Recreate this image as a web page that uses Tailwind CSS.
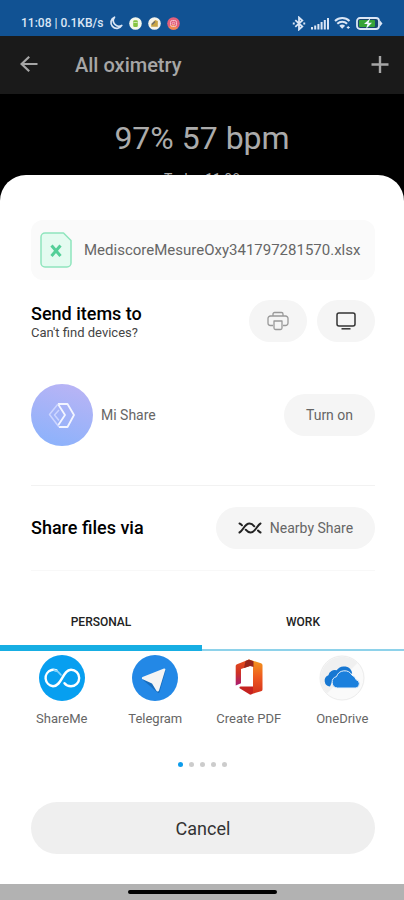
<!DOCTYPE html>
<html lang="en">
<head>
<meta charset="utf-8">
<meta name="viewport" content="width=device-width, initial-scale=1">
<title>All oximetry</title>
<script src="https://cdn.jsdelivr.net/npm/@tailwindcss/browser@4"></script>
</head>
<body class="flex min-h-screen flex-col bg-black font-['Roboto',sans-serif] text-[#555]">

<div class="flex h-9 items-center justify-between bg-[#115293] px-[21px] pt-[10px] text-[#dbe6f5]">
  <div class="flex items-center">
    <span class="text-[12px] font-medium leading-4">11:08 | 0.1KB/s</span>
    <svg class="ml-[6px] size-[14px]" viewBox="0 0 14 14" fill="none" stroke="currentColor" stroke-width="1.7" stroke-linejoin="round"><path d="M5.5 1.2a5.8 5.8 0 1 0 7.3 8.2A5.6 5.6 0 0 1 5.5 1.2z"/></svg>
    <svg class="ml-[6px] size-[13px]" viewBox="0 0 13 13"><circle cx="6.500" cy="6.500" r="6.300" fill="#f3f7ec"/><rect x="4.200" y="3.200" width="4.600" height="6.800" rx="1.300" fill="#86c440"/><path d="M4.500 5.500h4" stroke="#dff0c8" stroke-width=".8"/></svg>
    <svg class="ml-[6px] size-[13px]" viewBox="0 0 13 13"><circle cx="6.500" cy="6.500" r="6.300" fill="#f5f3ea"/><path d="M3.200 9.800V7l4-4 2.600 1v5.800z" fill="#c9a544"/><path d="M4 7.500l3-3" stroke="#6b6d70" stroke-width="1.500"/></svg>
    <svg class="ml-[6px] size-[13px]" viewBox="0 0 13 13"><circle cx="6.500" cy="6.500" r="6.300" fill="#e2607c"/><path d="M1.500 10.200A6.300 6.300 0 0 0 11 11L6 7z" fill="#f08a50"/><rect x="3.500" y="3.500" width="6" height="6" rx="1.800" fill="none" stroke="#f6bfcb"/><circle cx="6.500" cy="6.500" r="1.300" fill="none" stroke="#f6bfcb" stroke-width=".8"/></svg>
  </div>
  <div class="flex items-center gap-[5px]">
    <svg class="h-[15px] w-[14px]" viewBox="0 0 14 15" fill="none" stroke="currentColor" stroke-width="1.800"><path d="M3.300 4.200l7 6.300L7 13.500v-12l3.300 3-7 6.300"/><path d="M.8 7.500h1.900M11.300 7.500h1.900"/></svg>
    <svg class="h-[13px] w-[18px]" viewBox="0 0 18 13" fill="currentColor"><path d="M0 10h2v2.500H0zM3.200 8.500h2v4h-2zM6.400 7h2v5.500h-2zM9.600 5h2v7.500h-2zM12.800 3h2v9.500h-2zM16 1h2v11.500h-2z"/></svg>
    <svg class="h-[14px] w-[17px]" viewBox="0 0 17 14" fill="none" stroke="currentColor" stroke-width="2"><path d="M1 5a10.500 10.500 0 0 1 14.500 0M3.300 7.800a7 7 0 0 1 9.800 0"/><path d="M5.300 9.800a4.200 4.200 0 0 1 5.800 0l-2.900 3z" fill="currentColor" stroke="none"/><path d="M14.200 10v3M12.800 11.500h3" stroke-width="1"/></svg>
    <svg class="h-[13px] w-[27px]" viewBox="0 0 27 13"><rect x="1" y="1" width="22" height="11" rx="3" fill="#17456f" stroke="#dbe6f5" stroke-width="1.800"/><rect x="3" y="3" width="16" height="7" rx="1" fill="#36a336"/><path d="M24 3.500l2.500 3-2.500 3z" fill="#dbe6f5"/><path d="M14.500 1L8 7h3.500l-1.500 5 6-6.200H12.500z" fill="#f0f6ff"/></svg>
  </div>
</div>

<header class="flex h-[58px] items-center bg-[#1a1a1a] pl-[20px] pr-[15px] text-[#a6a6a6]">
  <button type="button" aria-label="Back" class="size-[18px]"><svg class="size-[18px]" viewBox="0 0 18 18" fill="none" stroke="currentColor" stroke-width="2.200"><path d="M17.500 8H2M9.200 .8L1.600 8l7.600 7.200"/></svg></button>
  <h1 class="ml-[37px] flex-1 text-[20px] font-medium leading-6">All oximetry</h1>
  <button type="button" aria-label="Add" class="size-[18px]"><svg class="size-[18px]" viewBox="0 0 18 18" stroke="currentColor" stroke-width="2.400"><path d="M9 0v17M.5 8.500h17"/></svg></button>
</header>

<section class="h-[81px] overflow-hidden pt-[24px] text-center text-[#ababab]">
  <p class="text-[32px] leading-10">97% 57 bpm</p>
  <p class="mt-[13px] text-[14px] leading-4">Today 11:08</p>
</section>

<main class="flex flex-1 flex-col rounded-t-[26px] bg-white pt-[45px]">
  <div class="pl-[31px] pr-[29px]">
    <div class="flex h-[60px] items-center gap-3 rounded-xl bg-[#fafafa] pl-[9px]">
      <svg class="h-[36px] w-[32px] shrink-0" viewBox="0 0 32 36"><path d="M5 1h18.500L31 8.500V31a4 4 0 0 1-4 4H5a4 4 0 0 1-4-4V5a4 4 0 0 1 4-4z" fill="#e4fbf0" stroke="#8fe5bd" stroke-width="1.500" stroke-linejoin="round"/><path d="M11.500 13.500l9 10.500M20.500 13.500l-9 10.500" stroke="#54cf98" stroke-width="3"/></svg>
      <span class="whitespace-nowrap text-[15px] leading-5 text-[#666]">MediscoreMesureOxy341797281570.xlsx</span>
    </div>

    <div class="mt-5 flex h-[42px] items-center gap-[10px]">
      <div class="flex-1 pt-1">
        <h2 class="text-[18px] font-medium leading-5 text-black">Send items to</h2>
        <a href="#" class="block text-[13px] leading-[18px] text-[#444]">Can't find devices?</a>
      </div>
      <button type="button" aria-label="Print" class="flex h-[42px] w-[58px] items-center justify-center rounded-full bg-[#f5f5f5] text-[#999]">
        <svg class="h-5 w-[22px]" viewBox="0 0 22 20" fill="none" stroke="currentColor" stroke-width="1.300" stroke-linejoin="round"><path d="M6 5V3a1.500 1.500 0 0 1 1.500-1.500h7A1.500 1.500 0 0 1 16 3v2M6 14.500H3.500a2.500 2.500 0 0 1-2.500-2.500V7.500A2.500 2.500 0 0 1 3.500 5h15A2.500 2.500 0 0 1 21 7.500V12a2.500 2.500 0 0 1-2.500 2.500H16"/><path d="M7 10h8v7a1.500 1.500 0 0 1-1.500 1.500h-5A1.500 1.500 0 0 1 7 17z"/></svg>
      </button>
      <button type="button" aria-label="Cast to screen" class="flex h-[42px] w-[58px] items-center justify-center rounded-full bg-[#f5f5f5] text-[#333]">
        <svg class="h-[18px] w-5" viewBox="0 0 20 18" fill="none" stroke="currentColor" stroke-width="1.500"><rect x="1" y="1" width="18" height="13" rx="2"/><path d="M5.500 16.800h9"/></svg>
      </button>
    </div>

    <div class="mt-[42px] flex items-center">
      <svg class="size-[62px]" viewBox="0 0 62 62" fill="none" stroke-linejoin="round"><defs><linearGradient id="mi" x1=".7" y1="0" x2=".4" y2="1"><stop stop-color="#b9b4f5"/><stop offset="1" stop-color="#8db2fb"/></linearGradient></defs><circle cx="31" cy="31" r="31" fill="url(#mi)"/><path d="M27 20h9.500L43 31l-6.500 12H28M27 20l7 11-7 10.500" stroke="#f3f5ff" stroke-width="1.800"/><path d="M27 20l-8.500 10.500L28 43M28 26l-4.500 5 4.500 5.500" stroke="#cdd6ff" stroke-width="1.500"/></svg>
      <span class="ml-2 flex-1 text-[14px] leading-5 text-[#666]">Mi Share</span>
      <button type="button" class="h-[42px] w-[91px] rounded-full bg-[#f5f5f5] text-[14px] text-[#666]">Turn on</button>
    </div>

    <div class="mt-[39px] border-t border-[#f2f2f2]"></div>
    <div class="mt-[21px] flex items-center justify-between">
      <h2 class="text-[18px] font-medium leading-5 text-black">Share files via</h2>
      <button type="button" class="flex h-[42px] w-[159px] items-center justify-center gap-2 rounded-full bg-[#f5f5f5] text-[14px] text-[#666]">
        <svg class="h-3 w-6" viewBox="0 0 24 12" fill="none" stroke="#222" stroke-width="2" stroke-linecap="round"><path d="M1.500 10.500C5 9 6.500 1.500 11.500 1.500c2 0 3.500 1.200 4.800 2.800M20 8.500c.7.800 1.500 1.500 2.500 2"/><path d="M22.500 1.500c-3.500 1.500-5 9-10 9-2 0-3.500-1.200-4.800-2.800M1.500 1.500c1 .3 1.800 1 2.500 1.800"/></svg>
        Nearby Share
      </button>
    </div>
    <div class="mt-[21px] border-t border-[#f8f8f8]"></div>
  </div>

  <div role="tablist" class="mt-[22px] grid grid-cols-2 text-[12px] font-medium text-[#222]">
    <button type="button" role="tab" aria-selected="true" class="h-[58px] border-b-[6px] border-[#17aee3] pt-[6px]">PERSONAL</button>
    <button type="button" role="tab" aria-selected="false" class="h-[58px] border-b-2 border-[#8ed2ea] pt-[2px]">WORK</button>
  </div>

  <div class="mt-1 grid grid-cols-4 px-[15px] text-[13px] leading-5 text-[#666]">
    <a href="#" class="flex flex-col items-center gap-2">
      <svg class="size-[46px]" viewBox="0 0 46 46" fill="none"><circle cx="23" cy="23" r="23" fill="#079ff0"/><path d="M17.500 15.300c-2-.6-3.500-.8-5-.3a8.300 8.300 0 0 0 1.500 16.200c9 0 9.500-16.400 18-16.400a8.200 8.200 0 0 1 0 16.400c-2.800 0-5-1-6.500-3" stroke="#fff" stroke-width="2.400" stroke-linecap="round"/><path d="M15 15c3.600.8 5.500 2.600 7 5" stroke="#83d2fa" stroke-width="1.600" stroke-linecap="round"/></svg>
      <span>ShareMe</span>
    </a>
    <a href="#" class="flex flex-col items-center gap-2">
      <svg class="size-[46px]" viewBox="0 0 46 46"><circle cx="23" cy="23" r="23" fill="#2388e6"/><path d="M12 24.500L32.500 16l-6 21z" fill="#176dbd" stroke="#176dbd" stroke-width="2" stroke-linejoin="round"/><path d="M10.500 22L32 13.500a1 1 0 0 1 1.300 1.300L27 35.500a1.500 1.500 0 0 1-2.600.3L20 28.500l-9.300-4.300a1.200 1.200 0 0 1-.2-2.200z" fill="#f4f4f4"/></svg>
      <span>Telegram</span>
    </a>
    <a href="#" class="flex flex-col items-center gap-2">
      <svg class="size-[46px]" viewBox="0 0 46 46"><defs><linearGradient id="of1" x1="0" y1="0" x2="0" y2="1"><stop stop-color="#e8501f"/><stop offset=".5" stop-color="#cf3324"/><stop offset="1" stop-color="#a81d75"/></linearGradient><linearGradient id="of2" x1="0" y1="0" x2="0" y2="1"><stop stop-color="#f39a1c"/><stop offset=".5" stop-color="#ee5a20"/><stop offset="1" stop-color="#d2301c"/></linearGradient></defs><path d="M23 4.500L11 9.200a2 2 0 0 0-1.300 1.900V30.500l5.300-2.300V14l9-3z" fill="url(#of1)"/><path d="M23 4.500l12 3.800a2 2 0 0 1 1.500 2v24a2 2 0 0 1-1.500 2l-11 3.200 3-4V10l-5-3z" fill="url(#of2)"/><path d="M19.500 6l3.500-1.500 4.500 1.800V12l-3.500-1-6 2z" fill="#97251c"/><path d="M14.500 31.500H27V37a2.500 2.500 0 0 1-4 2l-9-5.500c-1-.7-.6-2 .5-2z" fill="#c5221f"/></svg>
      <span>Create PDF</span>
    </a>
    <a href="#" class="flex flex-col items-center gap-2">
      <svg class="size-[46px]" viewBox="0 0 46 46"><circle cx="23" cy="23" r="22" fill="#fafafa" stroke="#ececec"/><path d="M8 38.500A21.500 21.500 0 1 1 38.500 8z" fill="#f0f0f0"/><path d="M11 31.500a5.800 5.800 0 0 1-1.600-11.200 6.500 6.500 0 0 1 8.300-5 8.500 8.500 0 0 1 15.500 3.200l-20 8z" fill="#1677d2"/><path d="M18.500 33a5.800 5.800 0 0 1-1-11.400 8.500 8.500 0 0 1 15.500-1.400 6 6 0 0 1 4 4.400 4.300 4.300 0 0 1 0 8.400z" fill="#1b80dd" stroke="#e8f1fa" stroke-width="1"/></svg>
      <span>OneDrive</span>
    </a>
  </div>

  <div class="mt-[33px] flex justify-center gap-[6px]">
    <span class="size-[5px] rounded-full bg-[#0d9ceb]"></span>
    <span class="size-[5px] rounded-full bg-[#ccc]"></span>
    <span class="size-[5px] rounded-full bg-[#ccc]"></span>
    <span class="size-[5px] rounded-full bg-[#ccc]"></span>
    <span class="size-[5px] rounded-full bg-[#ccc]"></span>
  </div>

  <div class="pb-[30px] pl-[31px] pr-[29px] pt-[35px]">
    <button type="button" class="h-[52px] w-full rounded-full bg-[#efefef] text-[18px] text-[#333]">Cancel</button>
  </div>
</main>

<div class="flex h-4 items-center justify-center bg-[#b2b2b2]">
  <div class="h-1 w-[149px] rounded-full bg-black"></div>
</div>
</body>
</html>
